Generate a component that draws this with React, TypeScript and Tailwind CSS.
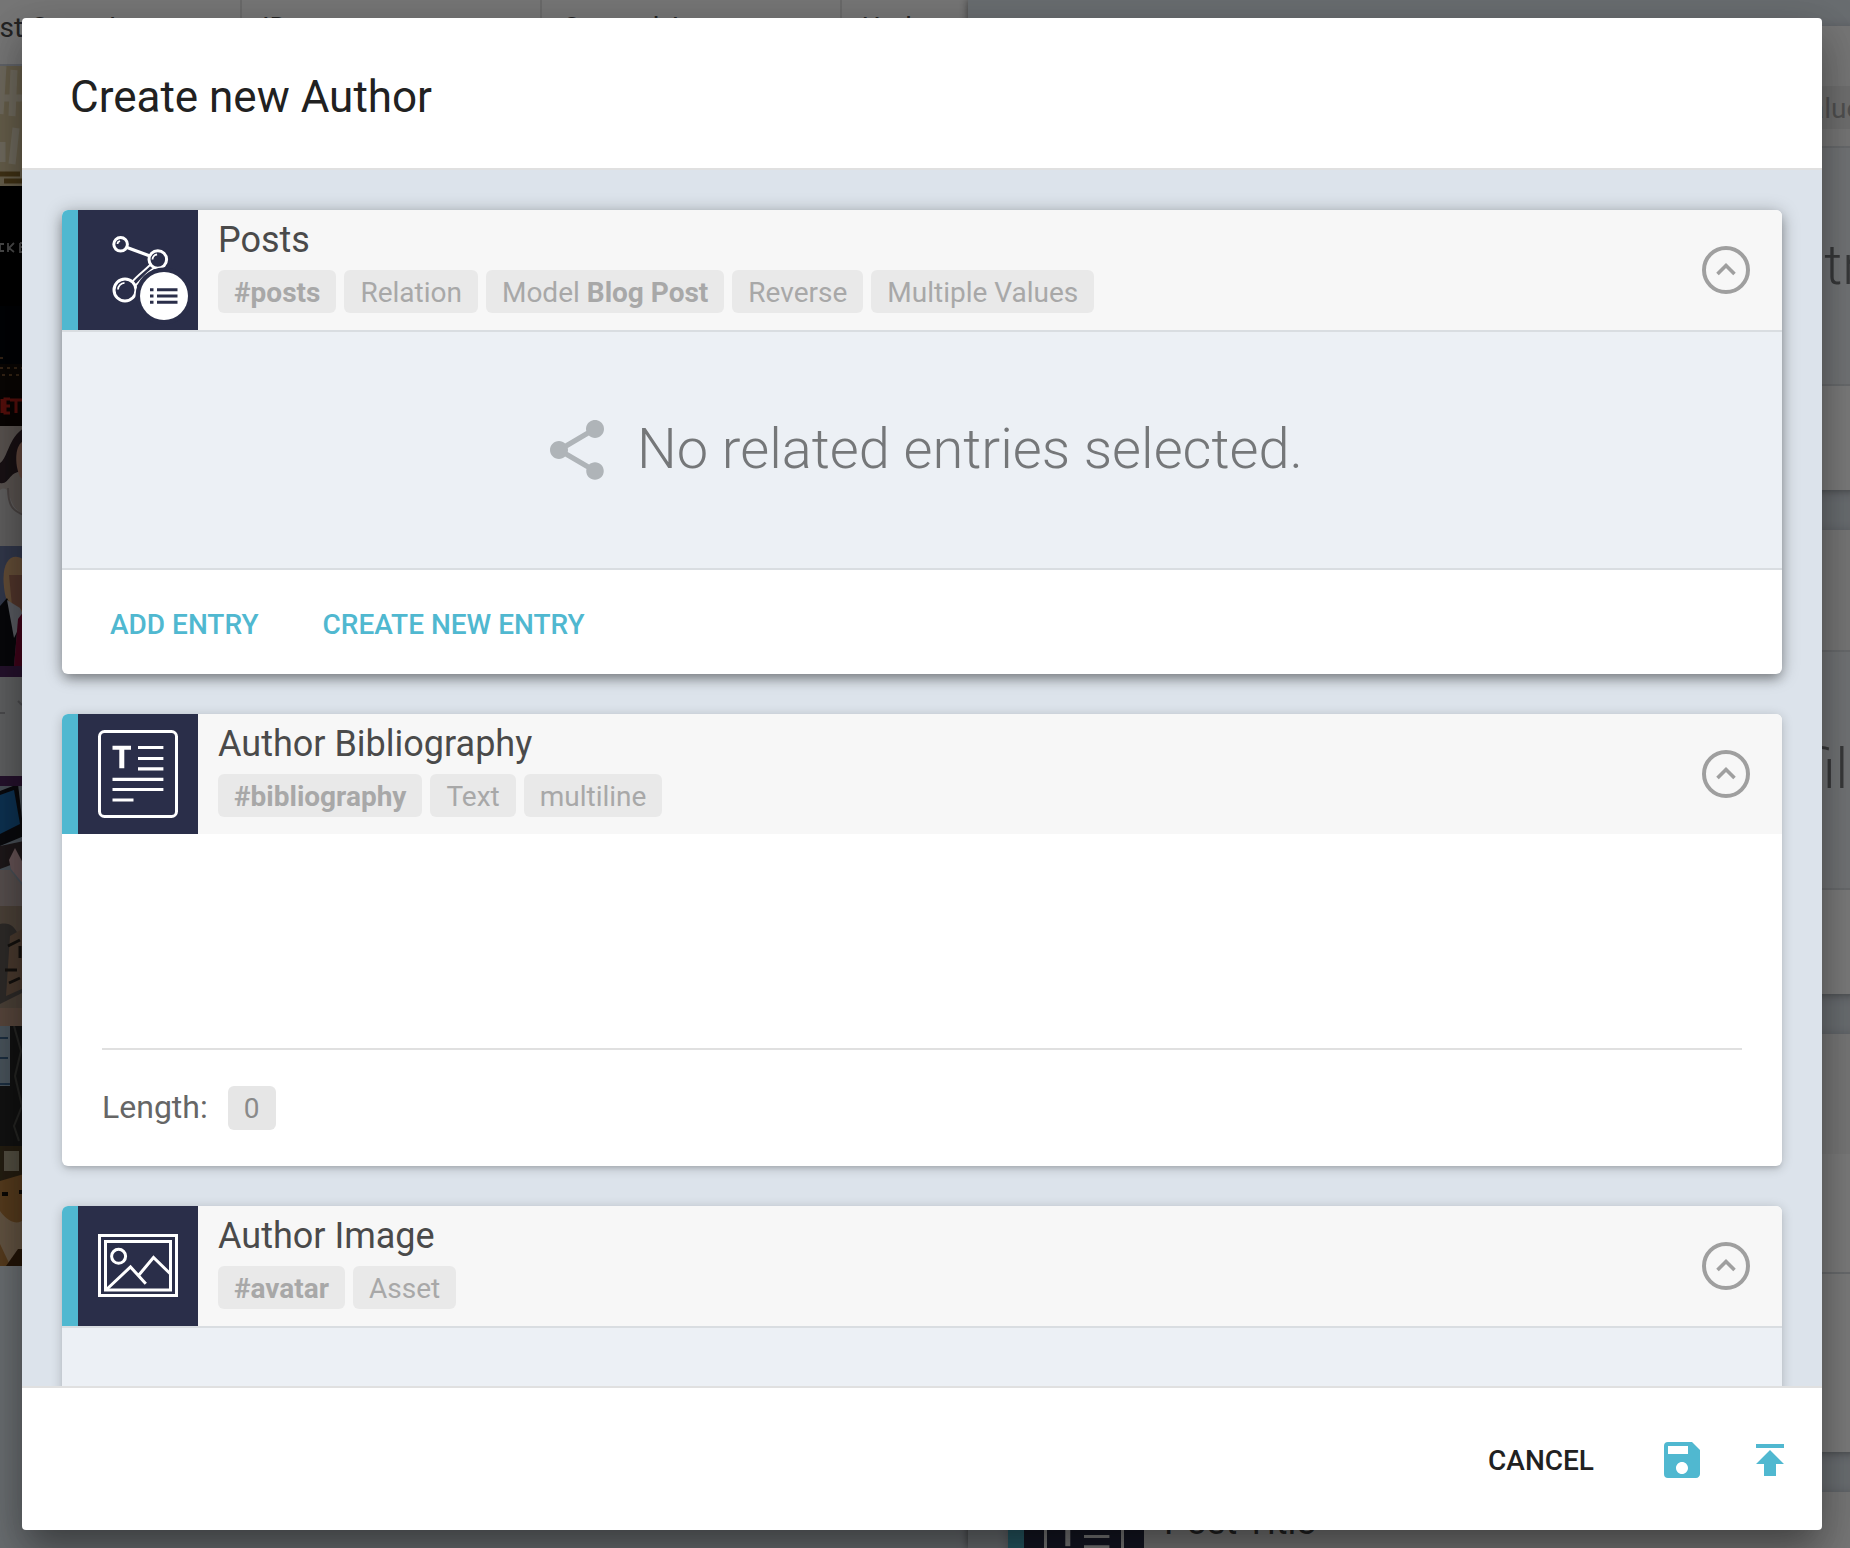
import type { ReactNode } from "react";

function RelationIcon() {
  return (
    <svg viewBox="0 0 120 120" className="size-[120px]" fill="none" stroke="white" strokeWidth="3" aria-hidden="true">
      <path d="M49 37.5 72 46" strokeWidth="3.4" />
      <path d="M72.500 54.500C65 62 60 65 54 72M77 57.500C68 63 65 68 57.500 75.500" strokeWidth="1.8" />
      <circle cx="42.6" cy="34.3" r="6.8" />
      <circle cx="79.8" cy="49.5" r="8.8" />
      <circle cx="47" cy="80" r="11" />
      <path d="M39.5 34a3 3 0 0 1 2.6-2.8M74.5 49.5a5 5 0 0 1 4.6-5M40 79.5a7 7 0 0 1 6.5-6.6" strokeWidth="1.8" />
      <circle cx="86" cy="86" r="28.5" fill="#2a2e49" stroke="none" />
      <circle cx="86" cy="86" r="24" fill="white" stroke="none" />
      <path d="M72 79.8h3.5M72 86h3.5M72 92.2h3.5M79 79.8h20.5M79 86h20.5M79 92.2h20.5" stroke="#2a2e49" />
    </svg>
  );
}

function TextIcon() {
  return (
    <svg viewBox="0 0 120 120" className="size-[120px]" fill="none" stroke="white" strokeWidth="3.2" aria-hidden="true">
      <rect x="21.5" y="17.5" width="77" height="85" rx="5" strokeWidth="3" />
      <path d="M34.5 33.8h18.5" strokeWidth="4" />
      <path d="M43.8 33v21.2" strokeWidth="5" />
      <path d="M60 33.5h25.4M60 44.5h25.4M60 54.8h25.4M34.5 65.3h50.9M34.5 75.5h50.9M34.5 86h21" />
    </svg>
  );
}

function ImageIcon() {
  return (
    <svg viewBox="0 0 120 120" className="size-[120px]" fill="none" stroke="white" strokeWidth="3" aria-hidden="true">
      <rect x="21.5" y="29.5" width="77" height="60" />
      <rect x="27.5" y="35.5" width="65" height="48.5" />
      <circle cx="40.6" cy="50.3" r="7" />
      <path d="M28.5 83.5 52.5 61 67.8 77.8M60.5 69.5 75.5 51.5 92.5 68" />
    </svg>
  );
}

function ChevronIcon() {
  return (
    <svg viewBox="0 0 48 48" className="size-12" fill="none" stroke="#9f9f9f" strokeWidth="4" aria-hidden="true">
      <circle cx="24" cy="24" r="22" />
      <path d="M15.5 28 24 19.5l8.500 8.500" strokeWidth="3.600" />
    </svg>
  );
}

function ShareIcon() {
  return (
    <svg viewBox="0 0 24 24" className="size-[72px] fill-[#afb4b8]" aria-hidden="true">
      <path d="M18 16.08c-.76 0-1.44.3-1.96.77L8.910 12.700c.05-.23.09-.46.09-.7s-.04-.47-.09-.7l7.050-4.110c.54.5 1.250.81 2.040.81 1.660 0 3-1.340 3-3s-1.340-3-3-3-3 1.340-3 3c0 .24.04.47.09.7L8.040 9.810C7.500 9.310 6.790 9 6 9c-1.660 0-3 1.340-3 3s1.340 3 3 3c.79 0 1.500-.31 2.040-.81l7.120 4.160c-.05.21-.08.43-.08.65 0 1.610 1.310 2.920 2.920 2.920s2.920-1.310 2.920-2.920-1.310-2.920-2.920-2.920z" />
    </svg>
  );
}

type Tag = { text?: string; strong?: string };

function Chip({ text, strong }: Tag) {
  return (
    <li className="h-[43px] rounded-md bg-[#e9e9e9] px-4 text-[28px] leading-[46px] whitespace-nowrap text-[#a8a8a8]">
      {text}
      {text && strong ? " " : null}
      {strong && <strong className="font-bold">{strong}</strong>}
    </li>
  );
}

function FieldCard({
  title,
  tags,
  icon,
  children,
  raised,
}: {
  title: string;
  tags: Tag[];
  icon: ReactNode;
  children?: ReactNode;
  raised?: boolean;
}) {
  return (
    <section
      className={
        "shrink-0 overflow-hidden rounded-md bg-white " +
        (raised
          ? "shadow-[0_6px_12px_-2px_rgba(0,0,0,0.32),0_2px_18px_0_rgba(0,0,0,0.28)]"
          : "shadow-[0_4px_4px_-2px_rgba(0,0,0,0.12),0_2px_12px_0_rgba(0,0,0,0.2)]")
      }
    >
      <header className="flex h-[120px] bg-[#f7f7f7]">
        <div className="w-4 shrink-0 bg-[#50b8d0]" />
        <div className="size-[120px] shrink-0 bg-[#2a2e49]">{icon}</div>
        <div className="flex min-w-0 flex-1 flex-col gap-2 pt-2 pl-5">
          <h2 className="text-[36px] leading-[44px] whitespace-nowrap text-[#4a4a4a]">{title}</h2>
          <ul className="flex gap-2">
            {tags.map((tag, i) => (
              <Chip key={i} {...tag} />
            ))}
          </ul>
        </div>
        <button type="button" aria-label={`Collapse ${title}`} className="mr-8 shrink-0 self-center">
          <ChevronIcon />
        </button>
      </header>
      {children}
    </section>
  );
}

function EmptyState({ message }: { message: string }) {
  return (
    <div className="flex h-60 items-center justify-center gap-6 border-y-2 border-[#d9dde1] bg-[#ecf0f5]">
      <ShareIcon />
      <p className="pb-0.5 text-[56px] leading-[64px] font-light whitespace-nowrap text-[#757779]">{message}</p>
    </div>
  );
}

function EntryActions() {
  return (
    <div className="flex h-[104px] items-center gap-8 px-8 pt-1.5 text-[28px] font-medium text-[#50b8d0]">
      <button type="button" className="h-[72px] px-4">ADD ENTRY</button>
      <button type="button" className="h-[72px] px-4">CREATE NEW ENTRY</button>
    </div>
  );
}

const thumbs: ReactNode[] = [
  <>
    <path fill="#d3c39c" d="M0 0h24v120H0z" />
    <path stroke="#e6dcc2" strokeWidth="7" d="M3 0 0 48M14 4 12 50M0 32h24M16 62 12 98M2 76v20" />
    <path stroke="#84672c" strokeWidth="5" d="M0 108h20M4 115h18" />
  </>,
  <>
    <path fill="#000" d="M0 0h24v120H0z" />
    <path stroke="#9a9a9a" strokeWidth="1.800" fill="none" d="M4 58H0v7h4M8 57v9M14 57l-5 5 5 4M20 57v9h4M20 57h4M20 61h4" />
  </>,
  <>
    <path fill="#04090d" d="M0 0h24v120H0z" />
    <path fill="#15100c" d="M0 58h24v42H0z" />
    <path stroke="#8a6038" strokeWidth="1.500" strokeDasharray="3 4" d="M0 52h6M0 62h24M2 69h20" />
    <path fill="#140b0a" d="M0 84h24v36H0z" />
    <path stroke="#b02019" strokeWidth="3" fill="none" d="M2 93v14M10 93H5v14h5M5 100h5M10 94h12M16 94v13" />
  </>,
  <>
    <path fill="#b8aba6" d="M0 0h24v120H0z" />
    <path fill="#33242a" d="M24 2C8 12 8 32 0 37v20c10 2 8-12 24-12z" />
    <path fill="#c8937e" d="M24 15c-9 3-10 22-4 36l4 3z" />
    <path fill="#c6c4c4" d="M0 64c12-8 6 18 24 24v32H0z" />
    <path stroke="#9a8d8b" strokeWidth="2" fill="none" d="M8 62c0 18 5 23 16 27" />
  </>,
  <>
    <path fill="#66739c" d="M0 0h24v120H0z" />
    <path fill="#cfa274" d="M5 48C-1 15 12 5 24 14v65L8 60z" />
    <path fill="#a8705a" d="M9 29h15v36L12 60z" />
    <path fill="#111217" d="m0 60 7-8 11 23-4 45H0z" />
    <path fill="#b8bcc9" d="m7 54 13 8 4 10-10 20z" />
    <path fill="#850c37" d="m18 73 6-8v55H14z" />
  </>,
  <>
    <path fill="#c4c6c9" d="M0 0h24v120H0z" />
    <path fill="#4f265c" d="M0 0h24v11H0zM0 110h24v10H0z" />
    <path stroke="#9b9c9f" strokeWidth="2" fill="none" d="M0 47h5M18 35l4 4" />
  </>,
  <>
    <path fill="#94a4b2" d="M0 0h24v120H0z" />
    <path fill="#15151c" d="m0 5 18-7 6 52-24 10z" />
    <path fill="#1c67a8" d="m0 9 14-5 6 34L0 48z" />
    <path fill="#3d3035" d="m0 60 24-5v19L0 83z" />
    <path fill="#d1abaf" d="m9 74 6-12 9 17v20L11 83z" />
    <path fill="#b3a4a2" d="M0 84h10l14 18v18H0z" />
  </>,
  <>
    <path fill="#9c8673" d="M0 0h24v120H0z" />
    <path fill="#5f5855" d="M0 18c18-4 20 17 24 30v38L0 98z" />
    <path fill="#967860" d="m10 30 14-8v60l-18 8z" />
    <path stroke="#2b241f" strokeWidth="3" d="m8 40 12-6M5 64h12M9 77l11-5M20 40v12" />
    <path fill="#b5907c" d="M0 102h24v18H0z" />
  </>,
  <>
    <path fill="#262726" d="M0 0h24v120H0z" />
    <path fill="#96acbc" d="M0 0h10v60H0z" />
    <path stroke="#3a5f85" strokeWidth="2" d="M0 12h8M0 32h8M0 58h10" />
    <path stroke="#4e4e4a" strokeWidth="2" d="m14 0 7 25-6 25 7 30-8 20 5 15" />
  </>,
  <>
    <path fill="#4d3e24" d="M0 0h24v120H0z" />
    <path fill="#aaa186" d="M4 5h15v20H4z" />
    <path fill="#b07a3d" d="m0 35 24-7v92H0z" />
    <path fill="#cbac88" d="M0 65c10 14 20 13 24 8v44H9L0 98z" />
    <path stroke="#1a140d" strokeWidth="4" d="M2 48h6M19 46h5" />
    <path fill="#4a2c11" d="M18 103h6v17H6z" />
  </>,
];

function Backdrop() {
  return (
    <div className="flex h-full w-full overflow-hidden bg-[#dce3eb]" aria-hidden="true">
      <div className="flex w-[968px] shrink-0 flex-col overflow-hidden">
        <div className="flex h-[66px] shrink-0 border-b-2 border-[#c9d0da] bg-[#f7f7f7] text-[28px] leading-[56px] whitespace-nowrap text-[#4a4a4a]">
          <div className="flex w-[242px] shrink-0 border-r-2 border-[#dedede]">
            <span className="-ml-[34px]">Post Cover Image</span>
          </div>
          <div className="w-[300px] shrink-0 border-r-2 border-[#dedede] pl-5">ID</div>
          <div className="w-[300px] shrink-0 border-r-2 border-[#dedede] pl-5">Created At</div>
          <div className="min-w-0 flex-1 truncate pr-3 pl-5">Updated At</div>
        </div>
        {thumbs.map((art, i) => (
          <svg key={i} viewBox="0 0 24 120" className="h-[120px] w-6 shrink-0" fill="none">
            {art}
          </svg>
        ))}
      </div>
      <div className="min-w-0 flex-1 overflow-hidden shadow-[0_0_8px_rgba(0,0,0,0.5)]">
        <div className="flex w-[1630px] flex-col gap-10 px-10 pt-[26px]">
          <FieldCard
            title="Post Authors"
            icon={<RelationIcon />}
            tags={[{ strong: "#authors" }, { text: "Relation" }, { text: "Model", strong: "Author" }, { text: "Multiple Values" }]}
          >
            <EmptyState message="No related entries selected." />
            <div className="h-[104px]" />
          </FieldCard>
          <FieldCard title="Post Cover Image" icon={<ImageIcon />} tags={[{ strong: "#cover" }, { text: "Asset" }]}>
            <EmptyState message="No files…" />
            <div className="h-[104px]" />
          </FieldCard>
          <FieldCard title="Post Content" icon={<TextIcon />} tags={[{ strong: "#content" }, { text: "Text" }]}>
            <div className="h-[120px] border-b-2 border-[#d9dde1]" />
            <div className="h-[178px]" />
          </FieldCard>
          <FieldCard title="Post Title" icon={<TextIcon />} tags={[{ strong: "#title" }, { text: "Text" }]} />
        </div>
      </div>
    </div>
  );
}

export default function App() {
  return (
    <div className="relative h-screen overflow-hidden font-[Roboto,sans-serif]">
      <Backdrop />
      <div className="absolute inset-0 flex bg-black/52 pt-[18px] pr-7 pb-[18px] pl-[22px]">
        <div
          role="dialog"
          aria-labelledby="dialog-title"
          className="flex min-w-0 flex-1 flex-col overflow-hidden rounded-[4px] bg-white shadow-[0_22px_30px_-14px_rgba(0,0,0,0.2),0_24px_40px_2px_rgba(0,0,0,0.2),0_10px_48px_4px_rgba(0,0,0,0.14)]"
        >
          <header className="flex h-[152px] shrink-0 items-center border-b-2 border-[#e0e0e0] px-12 pt-2">
            <h1 id="dialog-title" className="text-[44px] leading-[56px] text-[#212121]">
              Create new Author
            </h1>
          </header>
          <main className="flex min-h-0 flex-1 flex-col gap-10 overflow-y-auto bg-[#dce3eb] p-10 [scrollbar-width:none]">
            <FieldCard
              raised
              title="Posts"
              icon={<RelationIcon />}
              tags={[
                { strong: "#posts" },
                { text: "Relation" },
                { text: "Model", strong: "Blog Post" },
                { text: "Reverse" },
                { text: "Multiple Values" },
              ]}
            >
              <EmptyState message="No related entries selected." />
              <EntryActions />
            </FieldCard>
            <FieldCard
              title="Author Bibliography"
              icon={<TextIcon />}
              tags={[{ strong: "#bibliography" }, { text: "Text" }, { text: "multiline" }]}
            >
              <div className="flex flex-col px-10">
                <textarea
                  aria-label="Author Bibliography"
                  className="h-[216px] resize-none border-b-2 border-[#e0e0e0] py-4 text-[32px] text-[#4a4a4a] outline-none"
                />
                <div className="flex h-[116px] items-center gap-5 text-[32px] text-[#666]">
                  <span className="pb-0.5">Length:</span>
                  <output className="h-11 min-w-12 rounded-md bg-[#e6e6e6] text-center text-[28px] leading-[46px] text-[#8a8a8a]">
                    0
                  </output>
                </div>
              </div>
            </FieldCard>
            <FieldCard title="Author Image" icon={<ImageIcon />} tags={[{ strong: "#avatar" }, { text: "Asset" }]}>
              <EmptyState message="No asset selected." />
            </FieldCard>
          </main>
          <footer className="flex h-36 shrink-0 items-center justify-end gap-4 border-t-2 border-[#e0e0e0] pt-0.5 pr-4">
            <button type="button" className="mr-5 h-[72px] px-4 pt-0.5 text-[28px] font-medium text-[#212121]">
              CANCEL
            </button>
            <button type="button" aria-label="Save" className="flex size-[72px] items-center justify-center">
              <svg viewBox="0 0 24 24" className="size-12 fill-[#50b8d0]" aria-hidden="true">
                <path d="M17 3H5a2 2 0 0 0-2 2v14a2 2 0 0 0 2 2h14c1.100 0 2-.9 2-2V7l-4-4zm-5 16c-1.660 0-3-1.340-3-3s1.340-3 3-3 3 1.340 3 3-1.340 3-3 3zm3-10H5V5h10v4z" />
              </svg>
            </button>
            <button type="button" aria-label="Publish" className="flex size-[72px] items-center justify-center">
              <svg viewBox="0 0 24 24" className="size-12 fill-[#50b8d0]" aria-hidden="true">
                <path d="M5 4v2h14V4H5zm0 10h4v6h6v-6h4l-7-7-7 7z" />
              </svg>
            </button>
          </footer>
        </div>
      </div>
    </div>
  );
}
